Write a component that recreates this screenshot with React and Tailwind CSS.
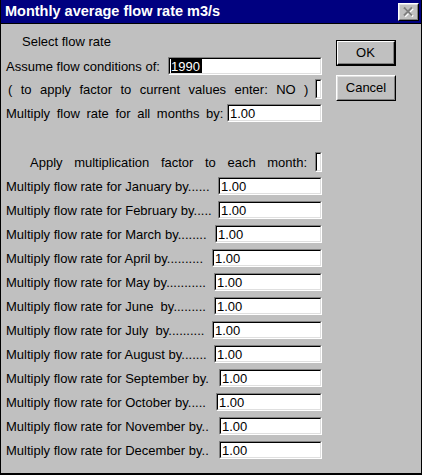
const font = { fontFamily: '"Liberation Sans", Arial, sans-serif' };

const months = [
  { label: 'Multiply flow rate for January by......', w: 'w-[212px]' },
  { label: 'Multiply flow rate for February by.....', w: 'w-[212px]' },
  { label: 'Multiply flow rate for March by........', w: 'w-[209px]' },
  { label: 'Multiply flow rate for April by..........', w: 'w-[206px]' },
  { label: 'Multiply flow rate for May by...........', w: 'w-[208px]' },
  { label: 'Multiply flow rate for June  by.........', w: 'w-[208px]' },
  { label: 'Multiply flow rate for July  by..........', w: 'w-[206px]' },
  { label: 'Multiply flow rate for August by.......', w: 'w-[208px]' },
  { label: 'Multiply flow rate for September by.', w: 'w-[213px]' },
  { label: 'Multiply flow rate for October by.....', w: 'w-[210px]' },
  { label: 'Multiply flow rate for November by..', w: 'w-[213px]' },
  { label: 'Multiply flow rate for December by..', w: 'w-[213px]' },
];

// sunken win95 edit field
const Field = ({ children, className = '' }) => (
  <div className={`h-[18px] border border-t-[#808080] border-l-[#808080] border-b-white border-r-white ${className}`}>
    <div className="h-full border border-t-black border-l-black border-b-[#dfdfdf] border-r-[#dfdfdf] bg-white flex items-center pl-[1px] text-[13px] text-black leading-none">
      {children}
    </div>
  </div>
);

const TinyBox = () => (
  <div className="w-[7px] h-[20px] border border-t-[#808080] border-l-[#808080] border-b-white border-r-white">
    <div className="h-full border border-t-black border-l-black border-b-[#dfdfdf] border-r-[#dfdfdf] bg-white" />
  </div>
);

const CloseButton = () => (
  <div className="w-[21px] h-[18px] border border-t-white border-l-white border-b-black border-r-black bg-[#c0c0c0]">
    <div className="h-full border border-t-[#dfdfdf] border-l-[#dfdfdf] border-b-[#808080] border-r-[#808080] flex items-center justify-center">
      <svg width="13" height="12" viewBox="0 0 13 12">
        <path d="M3 2.5 L11 10.5 M11 2.5 L3 10.5" stroke="#ffffff" strokeWidth="2" />
        <path d="M2 1.5 L10 9.5 M10 1.5 L2 9.5" stroke="#808080" strokeWidth="2" />
      </svg>
    </div>
  </div>
);

export default function App() {
  return (
    <div className="w-[422px] h-[475px] bg-[#c0c0c0] border-l border-r border-b-2 border-black flex flex-col text-black" style={font}>
      {/* Title bar */}
      <div className="h-[24px] bg-[#000080] border-b border-black flex items-center justify-between pl-[4px] pr-[2px] shrink-0">
        <span className="text-white font-bold text-[14.5px] leading-none">Monthly average flow rate m3/s</span>
        <CloseButton />
      </div>

      <div className="flex pt-[5px] pl-[5px]">
        {/* Fields */}
        <div className="w-[316px] flex flex-col text-[13px] leading-none">
          <div className="h-[24px] flex items-center pl-[16px]">Select flow rate</div>
          <div className="h-[24px] flex items-center pt-[2px]">
            <span className="w-[162px]">Assume flow conditions of:</span>
            <Field className="flex-1">
              <span className="bg-black text-white h-full flex items-center pr-[2px]">1990</span>
            </Field>
          </div>
          <div className="h-[24px] flex items-center justify-between">
            <span className="pl-[2px] whitespace-pre [word-spacing:4.8px]">( to apply factor to current values enter: NO )</span>
            <TinyBox />
          </div>
          <div className="h-[24px] flex items-center">
            <span className="w-[221px] [word-spacing:3px]">Multiply flow rate for all months by:</span>
            <Field className="flex-1">1.00</Field>
          </div>

          <div className="h-[24px] mt-[25px] flex items-center justify-between">
            <span className="pl-[24px] [word-spacing:8px]">Apply multiplication factor to each month:</span>
            <TinyBox />
          </div>
          {months.map((m) => (
            <div key={m.label} className="h-[24px] flex items-center">
              <span className={`${m.w} whitespace-pre`}>{m.label}</span>
              <Field className="flex-1">1.00</Field>
            </div>
          ))}
        </div>

        {/* Buttons */}
        <div className="ml-[14px] pt-[11px] flex flex-col gap-[9px] text-[13px]">
          <div className="w-[60px] h-[26px] border border-black">
            <div className="h-full border border-t-white border-l-white border-b-black border-r-black">
              <div className="h-full border-b border-r border-[#808080] flex items-center justify-center">OK</div>
            </div>
          </div>
          <div className="w-[60px] h-[26px] border border-t-white border-l-white border-b-black border-r-black">
            <div className="h-full border border-t-[#dfdfdf] border-l-[#dfdfdf] border-b-[#808080] border-r-[#808080] flex items-center justify-center">Cancel</div>
          </div>
        </div>
      </div>
    </div>
  );
}
